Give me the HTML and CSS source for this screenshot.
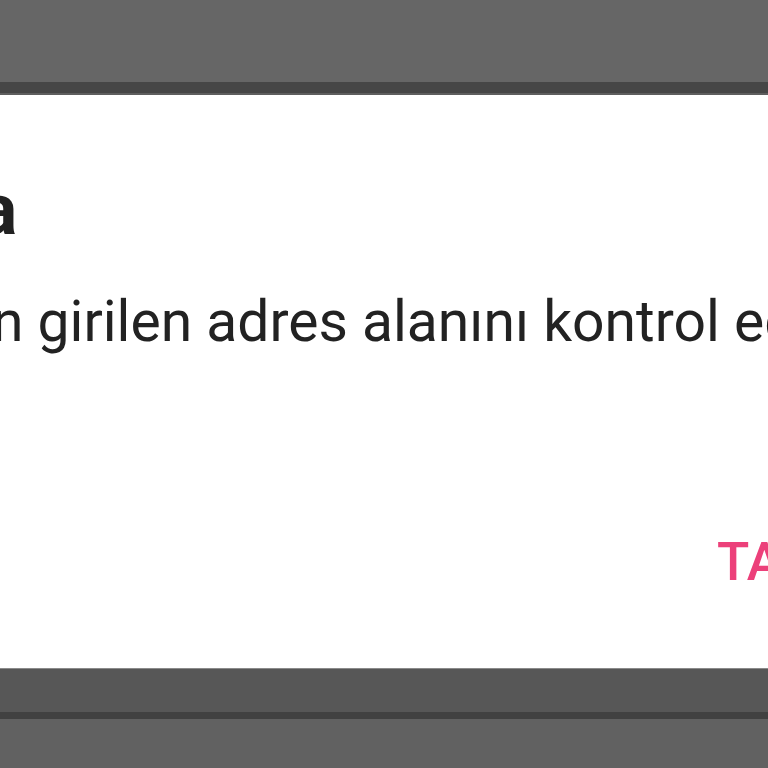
FILE: index.html
```html
<!DOCTYPE html>
<html lang="tr">
<head>
    <meta charset="UTF-8">
    <meta name="viewport" content="width=device-width, initial-scale=1.0">
    <title>Hata</title>
    <link rel="stylesheet" href="styles.css">
</head>
<body>
    <div class="screen">
        <div class="top-area"></div>
        <div class="top-band"></div>
        <div class="top-edge"></div>
        <div class="dialog">
            <div class="dialog-inner">
                <h1 class="dialog-title">Hata</h1>
                <p class="dialog-message">Lütfen girilen adres alanını kontrol edin</p>
                <div class="dialog-actions">
                    <button type="button" class="dialog-button">TAMAM</button>
                </div>
            </div>
        </div>
        <div class="bottom-edge"></div>
        <div class="bottom-area"></div>
        <div class="bottom-band"></div>
        <div class="bottom-rest"></div>
    </div>
</body>
</html>
```

FILE: styles.css
```css
html, body {
    margin: 0;
    padding: 0;
    height: 100%;
    overflow: hidden;
    background-color: #616161;
}
.screen {
    display: flex;
    flex-direction: column;
    height: 768px;
    font-family: Roboto, "Noto Sans", sans-serif;
}
.top-area {
    height: 82px;
    background-color: #666666;
}
.top-band {
    height: 11px;
    background-color: #464646;
}
.top-edge {
    height: 2px;
    background-color: #5e5e5e;
}
.dialog {
    height: 573px;
    background-color: #ffffff;
    overflow: hidden;
}
.dialog-inner {
    margin-left: -135px;
    padding-top: 72px;
    white-space: nowrap;
}
.dialog-title {
    margin: 0;
    font-size: 72px;
    line-height: 1.2;
    font-weight: 700;
    color: #212121;
}
.dialog-message {
    margin: 32px 0 0 -2px;
    font-size: 57px;
    line-height: 1.3;
    color: #222222;
}
.dialog-actions {
    margin-top: 172px;
    padding-left: 852px;
}
.dialog-button {
    padding: 0;
    border: none;
    background: none;
    font-family: Roboto, "Noto Sans", sans-serif;
    font-size: 53px;
    line-height: 1.2;
    font-weight: 500;
    color: #ec407a;
}
.bottom-edge {
    height: 1px;
    background-color: #8a8a8a;
}
.bottom-area {
    height: 43px;
    background-color: #575757;
}
.bottom-band {
    height: 7px;
    background-color: #414141;
}
.bottom-rest {
    flex: 1;
    background-color: #616161;
}
```
